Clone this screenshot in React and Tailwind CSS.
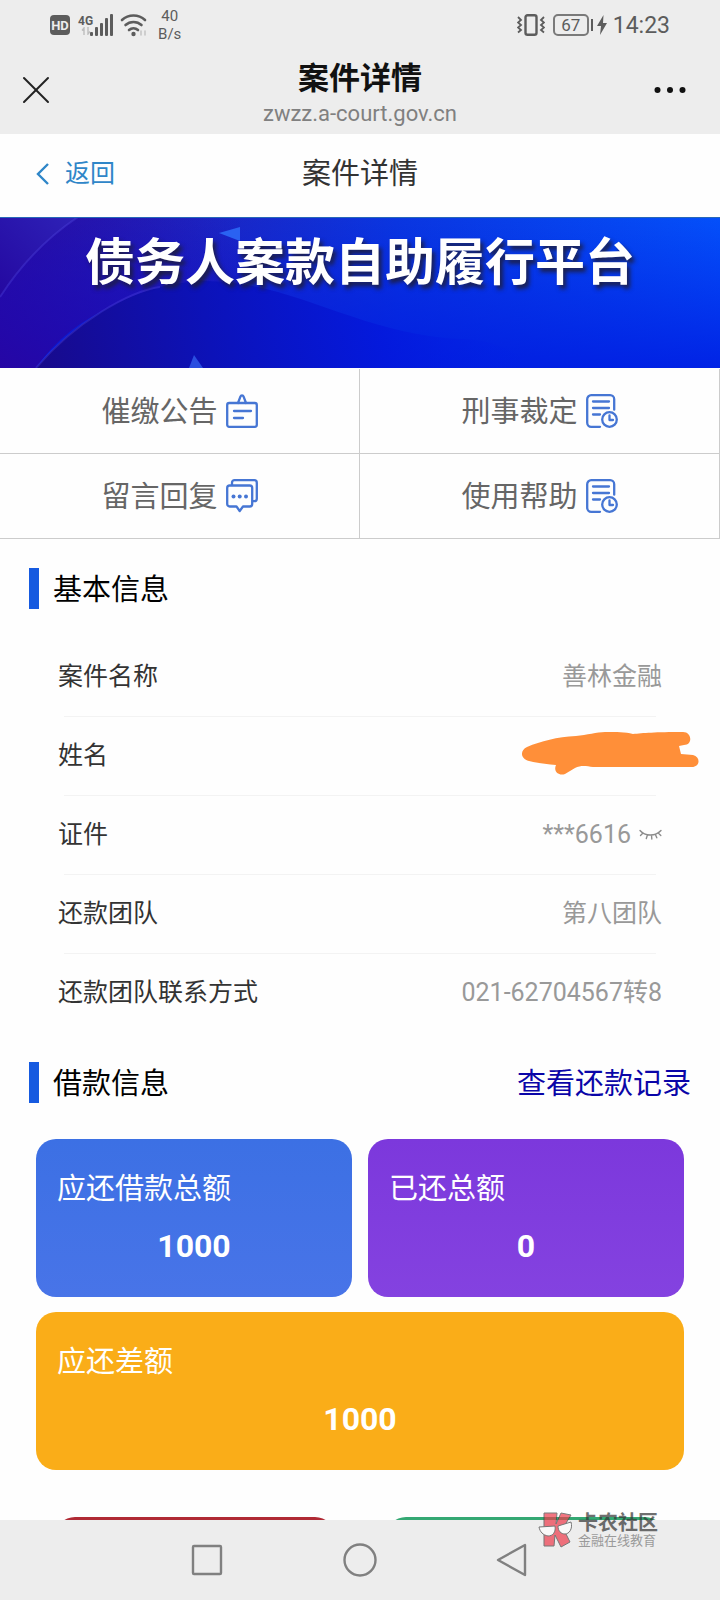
import { X } from 'lucide-react'

const details = [
  { label: '案件名称', value: '善林金融' },
  { label: '姓名', masked: true },
  { label: '证件', value: '***6616', hidden: true },
  { label: '还款团队', value: '第八团队' },
  { label: '还款团队联系方式', value: '021-62704567转8' },
]

const links = [
  { label: '催缴公告', Icon: NoticeIcon },
  { label: '刑事裁定', Icon: RecordIcon },
  { label: '留言回复', Icon: MessageIcon },
  { label: '使用帮助', Icon: RecordIcon },
]

function NoticeIcon() {
  return (
    <svg width="32" height="34" viewBox="0 0 32 34" fill="none" stroke="#4676d4" strokeWidth="2.300" strokeLinecap="round" strokeLinejoin="round">
      <rect x="1.200" y="9" width="29.600" height="23.800" rx="2" />
      <path d="M12 9l2.400-6.400a1.700 1.700 0 0 1 3.200 0L20 9M8 17h17M8 24h9" />
    </svg>
  )
}

function RecordIcon() {
  return (
    <svg width="32" height="34" viewBox="0 0 32 34" fill="none" stroke="#4676d4" strokeWidth="2.300" strokeLinecap="round" strokeLinejoin="round">
      <path d="M14 32.800H5.200a4 4 0 0 1-4-4V5.200a4 4 0 0 1 4-4h19a4 4 0 0 1 4 4v10.500M7 7.500h16M7 14h16M7 20.500h7" />
      <circle cx="23.500" cy="25.500" r="7.300" />
      <path d="M23.500 21.500V26H27" />
    </svg>
  )
}

function MessageIcon() {
  return (
    <svg width="32" height="34" viewBox="0 0 32 34" fill="none" stroke="#4676d4" strokeWidth="2.300" strokeLinecap="round" strokeLinejoin="round">
      <path d="M6 6V3.700A2.500 2.500 0 0 1 8.500 1.200h19.800a2.500 2.500 0 0 1 2.500 2.500v16a2.500 2.500 0 0 1-2.500 2.500H27" />
      <path d="M3.700 6.500h20A2.500 2.500 0 0 1 26.200 9v16a2.500 2.500 0 0 1-2.500 2.500H17L13.700 32 10.500 27.500H3.700A2.500 2.500 0 0 1 1.200 25V9a2.500 2.500 0 0 1 2.500-2.500z" />
      <g fill="#4676d4" stroke="none">
        <circle cx="7.500" cy="17.500" r="2" />
        <circle cx="13.700" cy="17.500" r="2" />
        <circle cx="20" cy="17.500" r="2" />
      </g>
    </svg>
  )
}

function EyeClosed() {
  return (
    <svg width="23" height="12" viewBox="0 0 23 12" fill="none" stroke="#8c8c8c" strokeWidth="1.400" strokeLinecap="round">
      <path d="M1 1.500c5 6 15.500 6 21 0M4 4L1.500 6.500M8.500 5.800L7.300 9.500M12.500 6l.3 4M16.300 5.200l1.500 3.600M19 3.800l2.800 2.600" />
    </svg>
  )
}

function Scribble() {
  return (
    <svg width="178" height="44" viewBox="0 0 178 44" className="block" aria-hidden="true">
      <path
        d="M6 15C20 9 36 5 55 4C66 3 76 0 84 0C96 0 104 0 112 2C122 1 134 0 162 0C171 0 172 13 163 13L158 14L160 22L172 23C180 25 179 35 171 35L72 35C65 34 60 33 54 36L44 42C38 44 32 40 35 33C26 32 16 31 8 29C-1 27-1 18 6 15z"
        fill="#ff8f39"
      />
    </svg>
  )
}

function StatusBar() {
  return (
    <div className="flex h-[50px] items-center justify-between px-[50px] text-[#5c5c5c]">
      <div className="flex items-center">
        <span className="flex size-5 items-center justify-center rounded bg-[#5c5c5c] text-[13px] leading-none font-bold text-[#ededed]">HD</span>
        <span className="ml-2 flex flex-col items-center text-[12px] leading-3 font-bold">
          4G
          <svg width="10" height="8" viewBox="0 0 10 8" fill="none" stroke="#bdbdbd" strokeWidth="1.400">
            <path d="M3 8V1L1 3.500M7 0v7l2-2.500" />
          </svg>
        </span>
        <svg className="-ml-1" width="25" height="22" viewBox="0 0 25 22" fill="currentColor">
          <rect x="1" y="18" width="3" height="4" rx="1" />
          <rect x="6" y="13" width="3" height="9" rx="1" />
          <rect x="11" y="9" width="3" height="13" rx="1" />
          <rect x="16" y="4" width="3" height="18" rx="1" />
          <rect x="21" y="0" width="3" height="22" rx="1" />
        </svg>
        <svg className="ml-1.5" width="28" height="24" viewBox="0 0 28 24" fill="none" stroke="currentColor" strokeWidth="2.600" strokeLinecap="round">
          <path d="M2 7a17 17 0 0 1 23 0M5.500 12a12 12 0 0 1 16 0M9 17a7 7 0 0 1 9 0" />
          <circle cx="13.500" cy="21" r="2.200" fill="currentColor" stroke="none" />
          <path d="M21 22v-4M25 18v4" stroke="#c4c4c4" strokeWidth="1.500" />
        </svg>
        <span className="ml-2.5 flex flex-col items-center text-[15px] leading-[18px]">
          <span>40</span>
          <span>B/s</span>
        </span>
      </div>
      <div className="flex items-center">
        <svg width="28" height="22" viewBox="0 0 28 22" fill="none" stroke="currentColor" strokeWidth="2">
          <rect x="8.500" y="1.200" width="11" height="19.600" rx="2" strokeWidth="2.400" />
          <path d="M1 3l3 3-3 2.500 3 2.500-3 2.500 3 2.500-3 2.500M27 3l-3 3 3 2.500-3 2.500 3 2.500-3 2.500 3 2.500" strokeWidth="1.800" />
        </svg>
        <span className="ml-2 flex h-[22px] w-9 items-center justify-center rounded-[5px] border-2 border-[#7a7a7a] text-[17px] leading-none">67</span>
        <span className="ml-0.5 h-3 w-0.5 bg-[#5c5c5c]" />
        <svg className="ml-1" width="10" height="20" viewBox="0 0 10 20" fill="currentColor">
          <path d="M6.500 0L0 11h4L3 20l7-12H6z" />
        </svg>
        <span className="ml-1.5 text-[23px] leading-none">14:23</span>
      </div>
    </div>
  )
}

function Banner() {
  return (
    <div className="relative h-[151px] overflow-hidden bg-[#0a18d0]">
      <svg className="absolute inset-0 h-full w-full" viewBox="0 0 720 151" preserveAspectRatio="none" aria-hidden="true">
        <defs>
          <linearGradient id="sky" x1="0" y1="0" x2="1" y2="0">
            <stop offset="0" stopColor="#2a14a6" />
            <stop offset="0.300" stopColor="#1b26c4" />
            <stop offset="0.550" stopColor="#0a36e0" />
            <stop offset="1" stopColor="#0450fa" />
          </linearGradient>
          <linearGradient id="depth" x1="0" y1="0" x2="0" y2="1">
            <stop offset="0" stopColor="#0018e0" stopOpacity="0" />
            <stop offset="1" stopColor="#0018e0" stopOpacity="0.800" />
          </linearGradient>
          <linearGradient id="hill" gradientUnits="userSpaceOnUse" x1="40" y1="150" x2="520" y2="60">
            <stop offset="0" stopColor="#180a8c" />
            <stop offset="0.350" stopColor="#0c12b8" />
            <stop offset="0.700" stopColor="#0418dc" stopOpacity="0.850" />
            <stop offset="1" stopColor="#0220e8" stopOpacity="0" />
          </linearGradient>
          <linearGradient id="rim" x1="0" y1="1" x2="1" y2="0">
            <stop offset="0" stopColor="#2408a0" />
            <stop offset="1" stopColor="#2e22b8" />
          </linearGradient>
          <linearGradient id="slope" x1="0" y1="1" x2="1" y2="0">
            <stop offset="0" stopColor="#2606a4" />
            <stop offset="1" stopColor="#2606a4" stopOpacity="0" />
          </linearGradient>
        </defs>
        <rect width="720" height="151" fill="url(#sky)" />
        <rect width="720" height="151" fill="url(#depth)" />
        <path d="M0 0h78C45 22 18 52 0 80z" fill="url(#rim)" />
        <path d="M0 80C18 52 45 22 78 0h162v72C150 68 80 88 36 151H0z" fill="url(#slope)" />
        <path d="M36 151C75 105 130 68 200 64C290 62 360 118 460 122C500 122 520 140 540 151z" fill="url(#hill)" />
        <path d="M0 80C18 52 45 22 78 0M36 151C75 105 130 74 160 70" fill="none" stroke="#5a4ee8" strokeOpacity="0.300" strokeWidth="2" />
        <path d="M219 16l21-6v14z" fill="#2a62f2" />
        <path d="M194 138l9 13h-14z" fill="#2a4ee0" />
        <rect width="720" height="1" fill="#2868b8" />
      </svg>
      <h2 className="relative pt-2.5 text-center text-[50px] leading-[72px] font-bold whitespace-nowrap text-white [text-shadow:3px_4px_4px_rgba(30,30,60,0.900)]">
        债务人案款自助履行平台
      </h2>
    </div>
  )
}

function SectionTitle({ children }) {
  return (
    <div className="flex h-[41px] gap-[14px]">
      <span className="w-[10px] bg-[#165ae0]" />
      <h3 className="text-[29px] leading-[45px] text-black">{children}</h3>
    </div>
  )
}

function AmountCard({ label, amount, className }) {
  return (
    <div className={`h-[158px] rounded-[20px] px-[21px] pt-[30px] text-white ${className}`}>
      <p className="text-[29px] leading-10">{label}</p>
      <p className="mt-4 text-center text-[32px] leading-[42px] font-bold">{amount}</p>
    </div>
  )
}

function Watermark() {
  return (
    <div className="absolute right-[62px] -top-2 flex items-start opacity-70">
      <svg width="36" height="36" viewBox="0 0 36 36" stroke="#444" strokeWidth="1" strokeLinejoin="round">
        <path d="M6 1h13l-1 11 5-11 10 2-8 13 7 14-9 5-6-12-1 11H6z" fill="#ee3b4c" />
        <path d="M1 15l16-1c1 6-2 10-7 10-5-1-8-4-9-9zM20 14l13-4c2 7-2 12-6 12-4 0-7-3-7-8z" fill="#fff" />
      </svg>
      <div className="pl-1 text-[#333]">
        <p className="text-[20px] leading-[22px] font-bold">卡农社区</p>
        <p className="text-[13px] leading-[14px] text-[#777]">金融在线教育</p>
      </div>
    </div>
  )
}

export default function App() {
  return (
    <div className="flex h-screen flex-col bg-[#fefefe] font-['Roboto','Noto_Sans_CJK_SC',sans-serif]">
      <header className="shrink-0 bg-[#ededed]">
        <StatusBar />
        <div className="grid h-[84px] grid-cols-[1fr_auto_1fr] items-center px-3">
          <button aria-label="关闭" className="pb-1 text-[#222]">
            <X size={48} strokeWidth={2} absoluteStrokeWidth />
          </button>
          <div className="pt-1 text-center">
            <h1 className="text-[31px] leading-[40px] font-bold text-[#111]">案件详情</h1>
            <p className="text-[22px] leading-[30px] text-[#808080]">zwzz.a-court.gov.cn</p>
          </div>
          <button aria-label="更多" className="justify-self-end px-[22px] pb-1">
            <svg width="32" height="8" viewBox="0 0 32 8" fill="#111">
              <circle cx="3.500" cy="4" r="3" />
              <circle cx="16" cy="4" r="3" />
              <circle cx="28.500" cy="4" r="3" />
            </svg>
          </button>
        </div>
      </header>

      <main className="min-h-0 flex-1 overflow-hidden">
        <div className="grid h-[83px] grid-cols-3 items-center px-9 pb-1">
          <a href="#back" className="flex items-center gap-4 text-[25px] leading-9 text-[#2f86c8]">
            <svg width="13" height="22" viewBox="0 0 13 22" fill="none" stroke="currentColor" strokeWidth="2.400">
              <path d="M12 1L2 11l10 10" />
            </svg>
            返回
          </a>
          <h2 className="text-center text-[29px] leading-9 text-[#333]">案件详情</h2>
        </div>

        <Banner />

        <nav className="grid grid-cols-2 pt-px">
          {links.map(({ label, Icon }) => (
            <a key={label} href="#link" className="flex h-[85px] items-center justify-center gap-2 border-r border-b border-[#ccc] text-[29px] text-[#666]">
              <span className="pt-0.5 leading-10">{label}</span>
              <Icon />
            </a>
          ))}
        </nav>

        <section className="pt-[29px]">
          <div className="px-[29px]">
            <SectionTitle>基本信息</SectionTitle>
          </div>
          <dl className="mt-[29px] px-[58px] text-[25px] leading-9">
            {details.map(({ label, value, masked, hidden }) => (
              <div key={label} className="group">
                <div className="flex h-[78px] items-center justify-between">
                  <dt className="text-[#333]">{label}</dt>
                  <dd className="flex items-center gap-2 text-[#999]">
                    {masked ? <span className="-mr-[37px] pb-1"><Scribble /></span> : value}
                    {hidden && <EyeClosed />}
                  </dd>
                </div>
                <div className="mx-1.5 h-px bg-[#f3f3f3] group-last:hidden" />
              </div>
            ))}
          </dl>
        </section>

        <section className="pt-[30px]">
          <div className="flex items-start justify-between px-[29px]">
            <SectionTitle>借款信息</SectionTitle>
            <a href="#records" className="text-[29px] leading-[45px] text-[#0a05a8]">查看还款记录</a>
          </div>
          <div className="mt-8 grid grid-cols-2 gap-x-4 gap-y-[15px] px-9">
            <AmountCard label="应还借款总额" amount="1000" className="bg-linear-to-b from-[#3c70e4] to-[#4874e8]" />
            <AmountCard label="已还总额" amount="0" className="bg-linear-to-b from-[#7c38dc] to-[#8442e0]" />
            <AmountCard label="应还差额" amount="1000" className="col-span-2 bg-[#faad18]" />
          </div>
          <div className="mt-[47px] grid grid-cols-2 gap-[51px] px-[55px]">
            <button aria-label="还款" className="h-20 rounded-[20px] bg-[#b02a34]" />
            <button aria-label="咨询" className="h-20 rounded-[20px] bg-[#34a873]" />
          </div>
        </section>
      </main>

      <footer className="relative flex h-20 shrink-0 items-center justify-center gap-[117px] bg-[#ededed]">
        <button aria-label="最近任务">
          <svg width="36" height="36" viewBox="0 0 36 36" fill="none" stroke="#808080" strokeWidth="2.400">
            <rect x="4" y="4" width="28" height="28" rx="1" />
          </svg>
        </button>
        <button aria-label="主页">
          <svg width="36" height="36" viewBox="0 0 36 36" fill="none" stroke="#808080" strokeWidth="2.400">
            <circle cx="18" cy="18" r="15.500" />
          </svg>
        </button>
        <button aria-label="返回上一页">
          <svg width="36" height="36" viewBox="0 0 36 36" fill="none" stroke="#808080" strokeWidth="2.400" strokeLinejoin="round">
            <path d="M30 3v30L3 18z" />
          </svg>
        </button>
        <Watermark />
      </footer>
    </div>
  )
}
